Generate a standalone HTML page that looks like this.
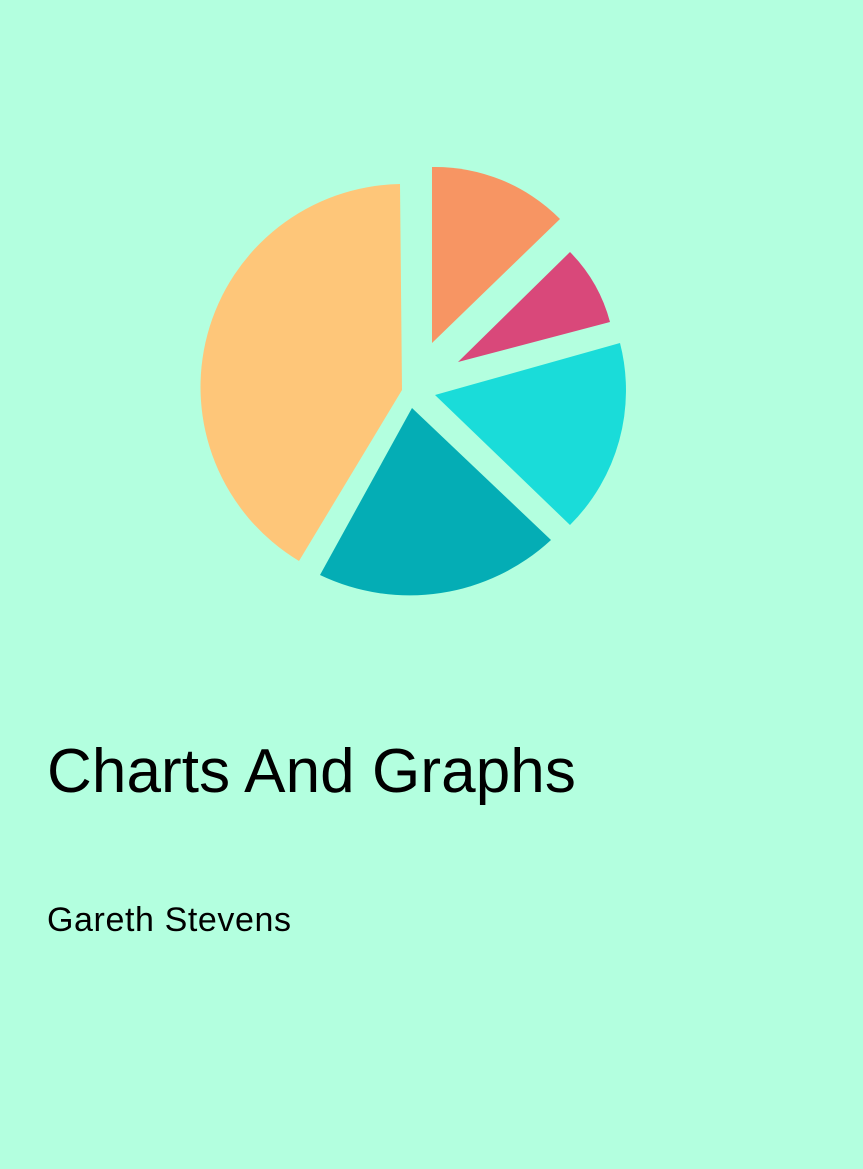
<!DOCTYPE html>
<html><head><meta charset="utf-8"><style>
html,body{margin:0;padding:0;}
body{width:863px;height:1169px;background:#b3ffdf;position:relative;overflow:hidden;font-family:"Liberation Sans","DejaVu Sans",sans-serif;color:#000;}
svg{position:absolute;left:0;top:0;}
.t{position:absolute;left:47px;top:741px;font-size:62px;white-space:nowrap;line-height:1;letter-spacing:0.1px;}
.a{position:absolute;left:47px;top:903px;font-size:34px;white-space:nowrap;line-height:1;letter-spacing:0.6px;}
</style></head><body>
<svg width="863" height="700" viewBox="0 0 863 700">
<path d="M402,390 L400,184 A203,203 0 0 0 299,561 Z" fill="#fec679"/>
<path d="M432,343 L432,167 A176,176 0 0 1 560,219 Z" fill="#f79563"/>
<path d="M458,362 L570,252 A157,157 0 0 1 610,322 Z" fill="#d9487a"/>
<path d="M435,395 L620,343 A190,190 0 0 1 570,525 Z" fill="#1adcd9"/>
<path d="M412,408 L551,540 A208,208 0 0 1 320,575 Z" fill="#04adb5"/>
</svg>
<div class="t">Charts And Graphs</div>
<div class="a">Gareth Stevens</div>
</body></html>
